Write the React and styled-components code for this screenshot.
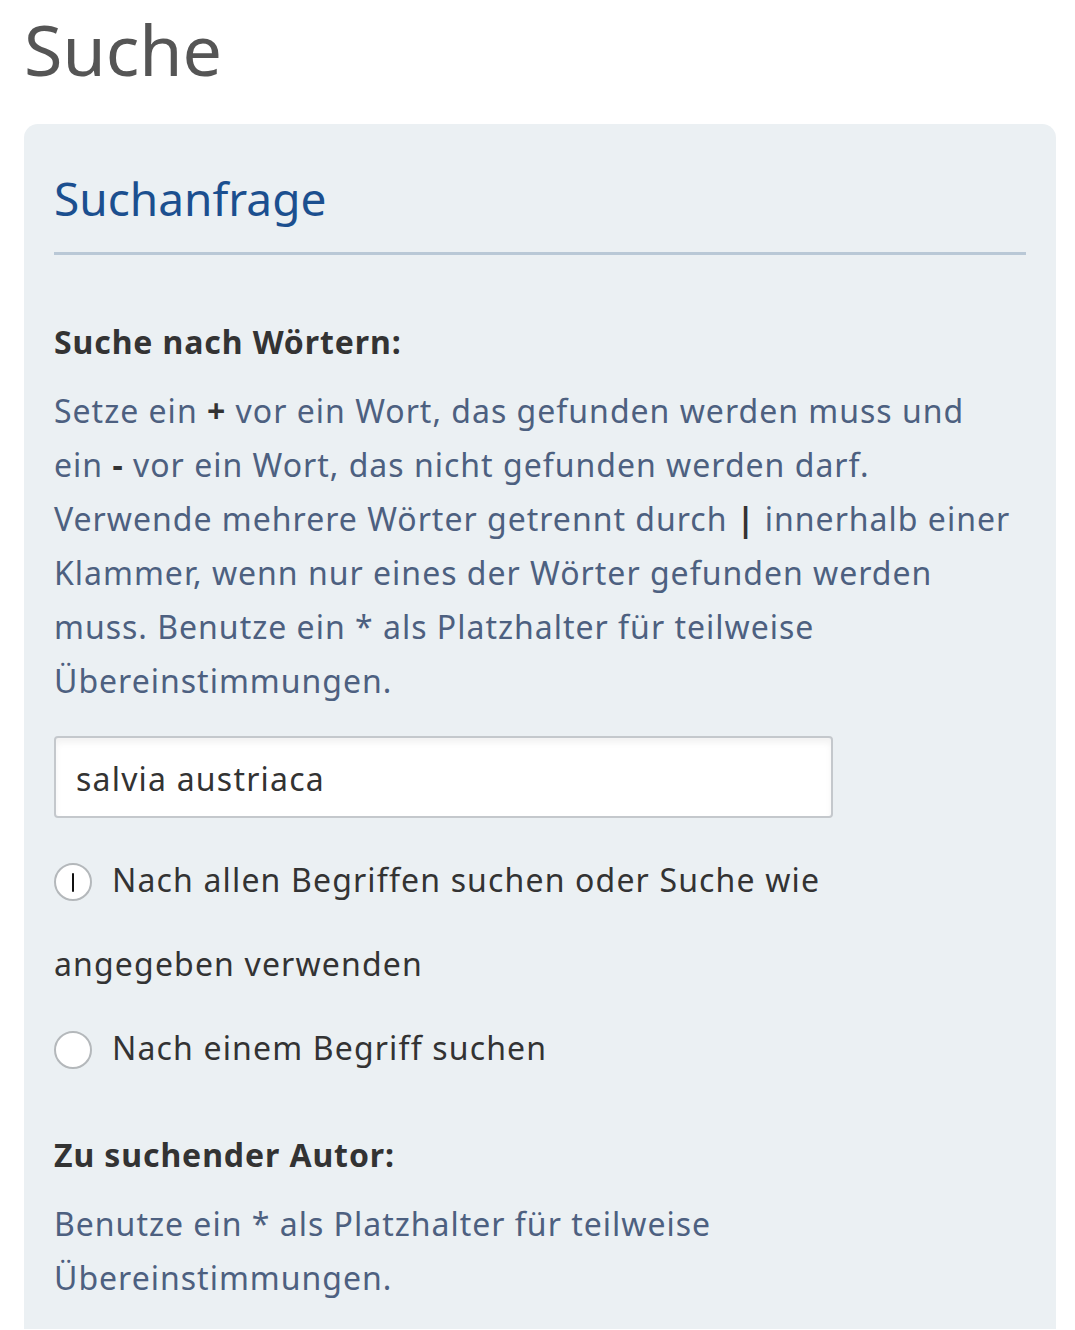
import React, { useState } from "react";
import styled, { createGlobalStyle } from "styled-components";

const GlobalStyle = createGlobalStyle`
    body {
        margin: 0;
        background: #ffffff;
        font-family: "Noto Sans", "Open Sans", sans-serif;
    }
`;

const App = () => {
    const [mode, setMode] = useState("all");
    const [words, setWords] = useState("salvia austriaca");

    return (
        <>
        <GlobalStyle />
        <StyledPage>
            <StyledTitle>Suche</StyledTitle>
            <StyledPanel>
                <StyledPanelTitle>Suchanfrage</StyledPanelTitle>

                <StyledLabel>Suche nach Wörtern:</StyledLabel>
                <StyledHint>
                    Setze ein <b>+</b> vor ein Wort, das gefunden werden muss und<br />
                    ein <b>-</b> vor ein Wort, das nicht gefunden werden darf.<br />
                    Verwende mehrere Wörter getrennt durch <b>|</b> innerhalb einer<br />
                    Klammer, wenn nur eines der Wörter gefunden werden<br />
                    muss. Benutze ein * als Platzhalter für teilweise<br />
                    Übereinstimmungen.
                </StyledHint>
                <StyledInput value={words} onChange={(e) => setWords(e.target.value)} />

                <StyledOptions>
                    <StyledOption onClick={() => setMode("all")}>
                        <StyledRadio $checked={mode === "all"} />
                        Nach allen Begriffen suchen oder Suche wie angegeben verwenden
                    </StyledOption>
                    <StyledOption onClick={() => setMode("one")}>
                        <StyledRadio $checked={mode === "one"} />
                        Nach einem Begriff suchen
                    </StyledOption>
                </StyledOptions>

                <StyledLabel $top>Zu suchender Autor:</StyledLabel>
                <StyledHint>
                    Benutze ein * als Platzhalter für teilweise<br />
                    Übereinstimmungen.
                </StyledHint>
            </StyledPanel>
        </StyledPage>
        </>
    );
};

const StyledPage = styled.div`
    padding: 0 19px 0 24px;
`;

const StyledTitle = styled.h1`
    margin: 0 0 30px;
    padding-top: 4px;
    font-size: 70px;
    line-height: 90px;
    font-weight: 400;
    color: #555555;
`;

const StyledPanel = styled.div`
    background: #ebf0f3;
    border-radius: 14px 14px 0 0;
    padding: 46px 30px 24px 30px;
`;

const StyledPanelTitle = styled.h2`
    margin: 0;
    padding-bottom: 26px;
    border-bottom: 3px solid #b9c8d6;
    font-size: 46px;
    line-height: 56px;
    font-weight: 400;
    color: #1b4f8f;
`;

const StyledLabel = styled.div`
    margin-top: ${(p) => (p.$top ? "38px" : "60px")};
    margin-bottom: 15px;
    font-size: 32px;
    line-height: 54px;
    font-weight: 700;
    letter-spacing: 0.9px;
    color: #333333;
`;

const StyledHint = styled.p`
    margin: 0;
    font-size: 32px;
    line-height: 54px;
    letter-spacing: 1px;
    color: #4d6080;
    b {
        color: #333333;
        font-weight: 700;
    }
`;

const StyledInput = styled.input`
    display: block;
    box-sizing: border-box;
    width: 779px;
    height: 82px;
    margin-top: 28px;
    padding: 2px 20px 0;
    border: 2px solid #c4c8cc;
    border-radius: 4px;
    background: #ffffff;
    box-shadow: inset 0 5px 6px rgba(0, 0, 0, 0.05);
    font-family: inherit;
    font-size: 32px;
    letter-spacing: 1.2px;
    color: #333333;
    outline: none;
`;

const StyledOptions = styled.div`
    width: 779px;
    margin-top: 20px;
`;

const StyledOption = styled.label`
    display: block;
    font-size: 32px;
    line-height: 84px;
    letter-spacing: 1.15px;
    color: #333333;
    cursor: pointer;
`;

const StyledRadio = styled.span`
    position: relative;
    display: inline-block;
    box-sizing: border-box;
    width: 38px;
    height: 38px;
    margin-right: 20px;
    vertical-align: -9px;
    border: 2px solid #b4b8bb;
    border-radius: 50%;
    background: #ffffff;
    &::after {
        content: "";
        display: ${(p) => (p.$checked ? "block" : "none")};
        position: absolute;
        left: 16px;
        top: 8px;
        width: 2px;
        height: 19px;
        border-radius: 2px;
        background: #111111;
    }
`;

export default App;
